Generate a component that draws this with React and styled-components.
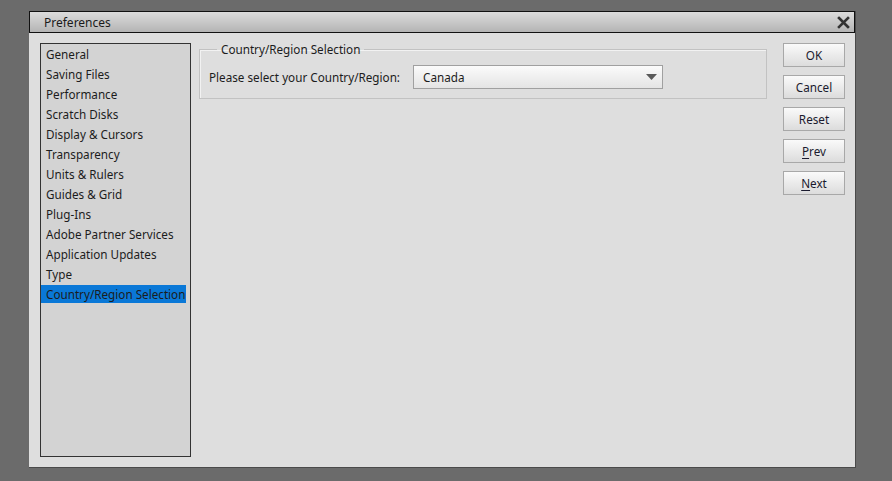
import React, { useState } from 'react';
import styled, { createGlobalStyle } from 'styled-components';

const GlobalStyle = createGlobalStyle`
  html, body {
    margin: 0;
    padding: 0;
    background: #6b6b6b;
    font-family: "Noto Sans", "Open Sans", sans-serif;
  }
`;

const Page = styled.div`
  width: 892px;
  height: 481px;
  padding: 11px 0 0 29px;
  box-sizing: border-box;
`;

const Dialog = styled.div`
  width: 827px;
  height: 457px;
  box-sizing: border-box;
  background: #dedede;
  border-right: 1px solid #4a4a4a;
  border-bottom: 1px solid #4a4a4a;
  display: flex;
  flex-direction: column;
`;

const TitleBar = styled.div`
  height: 22px;
  box-sizing: border-box;
  border: 1px solid #111;
  background: linear-gradient(#dcdcdc, #b4b4b4);
  display: flex;
  align-items: center;
  justify-content: space-between;
  padding: 0 4px 0 14px;
  font-size: 12px;
  color: #1a1a1a;
`;

const CloseIcon = () => (
  <svg width="13" height="13" viewBox="0 0 13 13">
    <path d="M2 2 L11 11 M11 2 L2 11" stroke="#333" strokeWidth="2.6" strokeLinecap="square" />
  </svg>
);

const Body = styled.div`
  flex: 1;
  display: flex;
  padding: 10px 10px 10px 11px;
  min-height: 0;
`;

const List = styled.ul`
  list-style: none;
  margin: 0;
  padding: 1px 4px 0 0;
  width: 151px;
  box-sizing: border-box;
  border: 1px solid #333;
  background: #d3d3d3;
`;

const Item = styled.li`
  height: 18px;
  margin-bottom: 2px;
  line-height: 19px;
  padding-left: 5px;
  font-size: 11.7px;
  color: #1c1c1c;
  white-space: nowrap;
  background: ${p => (p.$active ? '#0a78d7' : 'transparent')};
  cursor: default;
`;

const Content = styled.div`
  flex: 1;
  margin-left: 8px;
`;

const Group = styled.fieldset`
  margin: 0;
  padding: 10px 9px 9px 9px;
  border: 1px solid #c2c2c2;
  box-shadow: inset 1px 1px 0 #f2f2f2;
  min-width: 0;
`;

const Legend = styled.legend`
  margin-left: 8px;
  padding: 0 4px;
  font-size: 11.7px;
  color: #1c1c1c;
  line-height: 12px;
`;

const Row = styled.div`
  display: flex;
  align-items: center;
`;

const Label = styled.span`
  font-size: 11.7px;
  color: #1c1c1c;
  width: 204px;
`;

const Select = styled.div`
  width: 250px;
  height: 24px;
  box-sizing: border-box;
  border: 1px solid #a0a0a0;
  background: linear-gradient(#fbfbfb, #e4e4e4);
  display: flex;
  align-items: center;
  justify-content: space-between;
  padding: 0 5px 0 9px;
  font-size: 11.7px;
  color: #1c1c1c;
`;

const Arrow = () => (
  <svg width="11" height="6" viewBox="0 0 11 6">
    <path d="M0 0 H11 L5.5 6 Z" fill="#5a5a5a" />
  </svg>
);

const Buttons = styled.div`
  display: flex;
  flex-direction: column;
  gap: 8px;
  margin-left: 16px;
`;

const Button = styled.button`
  width: 62px;
  height: 24px;
  box-sizing: border-box;
  border: 1px solid #a8a8a8;
  background: linear-gradient(#fafafa, #dcdcdc);
  font-family: inherit;
  font-size: 11.7px;
  color: #1a1a2e;
  padding: 0;
  cursor: default;

  u {
    text-decoration-thickness: 1px;
    text-underline-offset: 2px;
  }
`;

const sections = [
  'General',
  'Saving Files',
  'Performance',
  'Scratch Disks',
  'Display & Cursors',
  'Transparency',
  'Units & Rulers',
  'Guides & Grid',
  'Plug-Ins',
  'Adobe Partner Services',
  'Application Updates',
  'Type',
  'Country/Region Selection',
];

export default function App() {
  const [active, setActive] = useState('Country/Region Selection');

  return (
    <Page>
      <GlobalStyle />
      <Dialog>
        <TitleBar>
          <span>Preferences</span>
          <CloseIcon />
        </TitleBar>
        <Body>
          <List>
            {sections.map(s => (
              <Item key={s} $active={s === active} onClick={() => setActive(s)}>
                {s}
              </Item>
            ))}
          </List>
          <Content>
            <Group>
              <Legend>Country/Region Selection</Legend>
              <Row>
                <Label>Please select your Country/Region:</Label>
                <Select>
                  <span>Canada</span>
                  <Arrow />
                </Select>
              </Row>
            </Group>
          </Content>
          <Buttons>
            <Button>OK</Button>
            <Button>Cancel</Button>
            <Button>Reset</Button>
            <Button><u>P</u>rev</Button>
            <Button><u>N</u>ext</Button>
          </Buttons>
        </Body>
      </Dialog>
    </Page>
  );
}
